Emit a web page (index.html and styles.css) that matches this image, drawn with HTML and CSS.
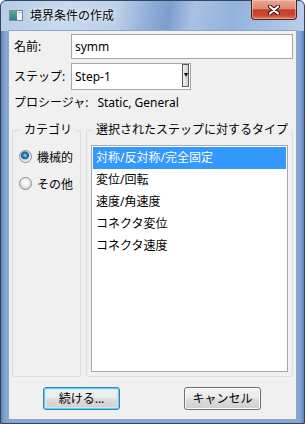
FILE: index.html
```html
<!DOCTYPE html>
<html lang="ja">
<head>
<meta charset="utf-8">
<title>境界条件の作成</title>
<link rel="stylesheet" href="styles.css">
</head>
<body>
<div class="window">
  <div class="titlebar">
    <svg class="appicon" width="14" height="11" viewBox="0 0 14 11">
      <defs>
        <linearGradient id="ig" x1="0" y1="0" x2="0" y2="1">
          <stop offset="0" stop-color="#4fb08a"/>
          <stop offset="1" stop-color="#2f7f9a"/>
        </linearGradient>
      </defs>
      <rect x="0.5" y="0.5" width="13" height="10" fill="#eef2f6" stroke="#7d8894"/>
      <rect x="1" y="1" width="7" height="9" fill="url(#ig)"/>
      <rect x="9" y="2" width="4" height="1" fill="#b8c4d0"/>
    </svg>
    <span class="title">境界条件の作成</span>
    <div class="close">
      <svg width="12" height="10" viewBox="0 0 12 10">
        <path d="M2 1.5 L10 8.5 M10 1.5 L2 8.5" stroke="#3b1409" stroke-width="4.2" stroke-linecap="round"/>
        <path d="M2 1.5 L10 8.5 M10 1.5 L2 8.5" stroke="#ffffff" stroke-width="2.2" stroke-linecap="round"/>
      </svg>
    </div>
  </div>
  <div class="client">
    <div class="row r-name">
      <span class="lbl">名前:</span>
      <div class="input">symm</div>
    </div>
    <div class="row r-step">
      <span class="lbl">ステップ:</span>
      <div class="select">
        <span class="sel-text">Step-1</span>
        <span class="dd"><span class="tri"></span></span>
      </div>
    </div>
    <div class="proc"><span>プロシージャ:</span><span class="proc-val">Static, General</span></div>
    <div class="groups">
      <div class="grp cat">
        <span class="legend">カテゴリ</span>
        <div class="radio-row"><span class="radio on"></span><span>機械的</span></div>
        <div class="radio-row"><span class="radio"></span><span>その他</span></div>
      </div>
      <div class="grp types">
        <span class="legend">選択されたステップに対するタイプ</span>
        <div class="list">
          <div class="item sel">対称/反対称/完全固定</div>
          <div class="item">変位/回転</div>
          <div class="item">速度/角速度</div>
          <div class="item">コネクタ変位</div>
          <div class="item">コネクタ速度</div>
        </div>
      </div>
    </div>
    <div class="buttons">
      <div class="btn default">続ける...</div>
      <div class="btn">キャンセル</div>
    </div>
  </div>
</div>
</body>
</html>
```

FILE: styles.css
```css
* { box-sizing: border-box; }
html, body { margin: 0; padding: 0; }
body {
  width: 305px;
  height: 424px;
  overflow: hidden;
  background: #ffffff;
  font-family: "Noto Sans", "Noto Sans CJK JP", sans-serif;
  font-size: 12px;
  color: #000;
}
.window {
  width: 305px;
  height: 424px;
  border: 1px solid #34465f;
  border-radius: 6px 6px 0 0;
  padding: 0 7px 3px 7px;
  display: flex;
  flex-direction: column;
  background:
    linear-gradient(100deg, #b7cce7 0%, #c8d9ef 22%, #bdd0ea 38%, #93b0d9 48%, #7c9dcf 55%, #a9c1e3 63%, #93b2db 76%, #a6c0e4 88%, #b9cfeb 100%) 0 0 / 100% 30px no-repeat,
    linear-gradient(90deg, #5f82ba 0px, #86a5d3 4px, #86a5d3 calc(100% - 4px), #5f82ba 100%);
}
.titlebar {
  height: 29px;
  display: flex;
  align-items: center;
  flex: none;
}
.appicon { margin-left: 1px; margin-top: -1px; flex: none; }
.title {
  margin-left: 7px;
  line-height: 16px;
  color: #000;
  text-shadow: 0 0 5px rgba(255,255,255,0.9), 0 0 2px rgba(255,255,255,0.8);
}
.close {
  margin-left: auto;
  align-self: flex-start;
  margin-top: -1px;
  width: 46px;
  height: 20px;
  border: 1px solid #4a2218;
  border-top: none;
  border-radius: 0 0 4px 4px;
  background: linear-gradient(#e8a797 0%, #dc8a77 45%, #c3402a 52%, #c9472f 80%, #e27b5e 100%);
  box-shadow: inset 0 0 0 1px rgba(255,210,200,0.5);
  display: flex;
  align-items: center;
  justify-content: center;
}
.client {
  flex: 1;
  min-height: 0;
  background: #f0f0f0;
  border: 1px solid #8fa7c9;
  display: flex;
  flex-direction: column;
}
.row {
  display: flex;
  align-items: center;
  padding-left: 5px;
}
.lbl { width: 57px; flex: none; line-height: 16px; }
.r-name { margin-top: 3px; }
.input {
  width: 222px;
  height: 25px;
  background: #fff;
  border: 1px solid #a5a5a5;
  padding-left: 3px;
  display: flex;
  align-items: center;
  line-height: 16px;
}
.r-step { margin-top: 4px; }
.select {
  width: 120px;
  height: 27px;
  background: #fff;
  border: 1px solid #a5a5a5;
  display: flex;
  align-items: center;
}
.sel-text { padding-left: 3px; line-height: 16px; }
.dd {
  margin-left: auto;
  margin-right: 1px;
  align-self: flex-start;
  width: 7px;
  height: 23px;
  border: 1px solid #5a5a5a;
  background: linear-gradient(90deg, #f0f0f0, #d2d2d2);
  display: flex;
  justify-content: flex-end;
  padding-top: 8px;
}
.tri {
  width: 0;
  height: 0;
  border-left: 2px solid transparent;
  border-right: 2px solid transparent;
  border-top: 4px solid #000;
}
.proc {
  margin-top: 5px;
  padding-left: 5px;
  line-height: 16px;
}
.proc-val { margin-left: 9px; }
.groups {
  flex: 1;
  min-height: 0;
  margin-top: 19px;
  padding-left: 3px;
  display: flex;
  gap: 5px;
}
.grp {
  position: relative;
  border: 1px solid #d5dfe5;
  border-radius: 3px;
  display: flex;
  flex-direction: column;
}
.legend {
  position: absolute;
  top: -9px;
  padding: 0 3px;
  line-height: 16px;
  background: #f0f0f0;
  white-space: nowrap;
}
.cat { width: 69px; padding: 12px 0 0 6px; }
.cat .legend { left: 8px; }
.types { width: 207px; padding: 14px 4px 4px 4px; }
.types .legend { left: 6px; }
.radio-row {
  height: 27px;
  display: flex;
  align-items: center;
  white-space: nowrap;
}
.radio {
  width: 13px;
  height: 13px;
  flex: none;
  border-radius: 50%;
  border: 1px solid #8c8e90;
  background: radial-gradient(circle at 50% 40%, #ffffff 0, #f2f2f2 3px, #d4d6d8 6px);
  margin-right: 5px;
}
.radio.on {
  background: radial-gradient(circle at 45% 40%, #8fd8f8 0, #2f8cc6 2px, #18507c 3.6px, #c9d2d8 4.2px, #eeeeee 6px);
}
.list {
  flex: 1;
  background: #fff;
  border: 1px solid #a8a8a8;
  padding: 1px;
}
.item {
  height: 22px;
  line-height: 22px;
  padding-left: 3px;
  white-space: nowrap;
}
.item.sel { background: #3399ff; color: #fff; }
.buttons {
  flex: none;
  display: flex;
  gap: 64px;
  padding-left: 34px;
  margin-top: 10px;
  margin-bottom: 9px;
}
.btn {
  width: 77px;
  height: 23px;
  border: 1px solid #707070;
  border-radius: 3px;
  background: linear-gradient(#f2f2f2 0%, #ebebeb 48%, #dddddd 52%, #cfcfcf 100%);
  box-shadow: inset 0 0 0 1px #fbfbfb;
  display: flex;
  align-items: center;
  justify-content: center;
  line-height: 16px;
}
.btn.default {
  border-color: #3c7fb1;
  box-shadow: inset 0 0 0 1px #5fd0f6, inset 0 0 0 2px #c4ecfb;
}
```
